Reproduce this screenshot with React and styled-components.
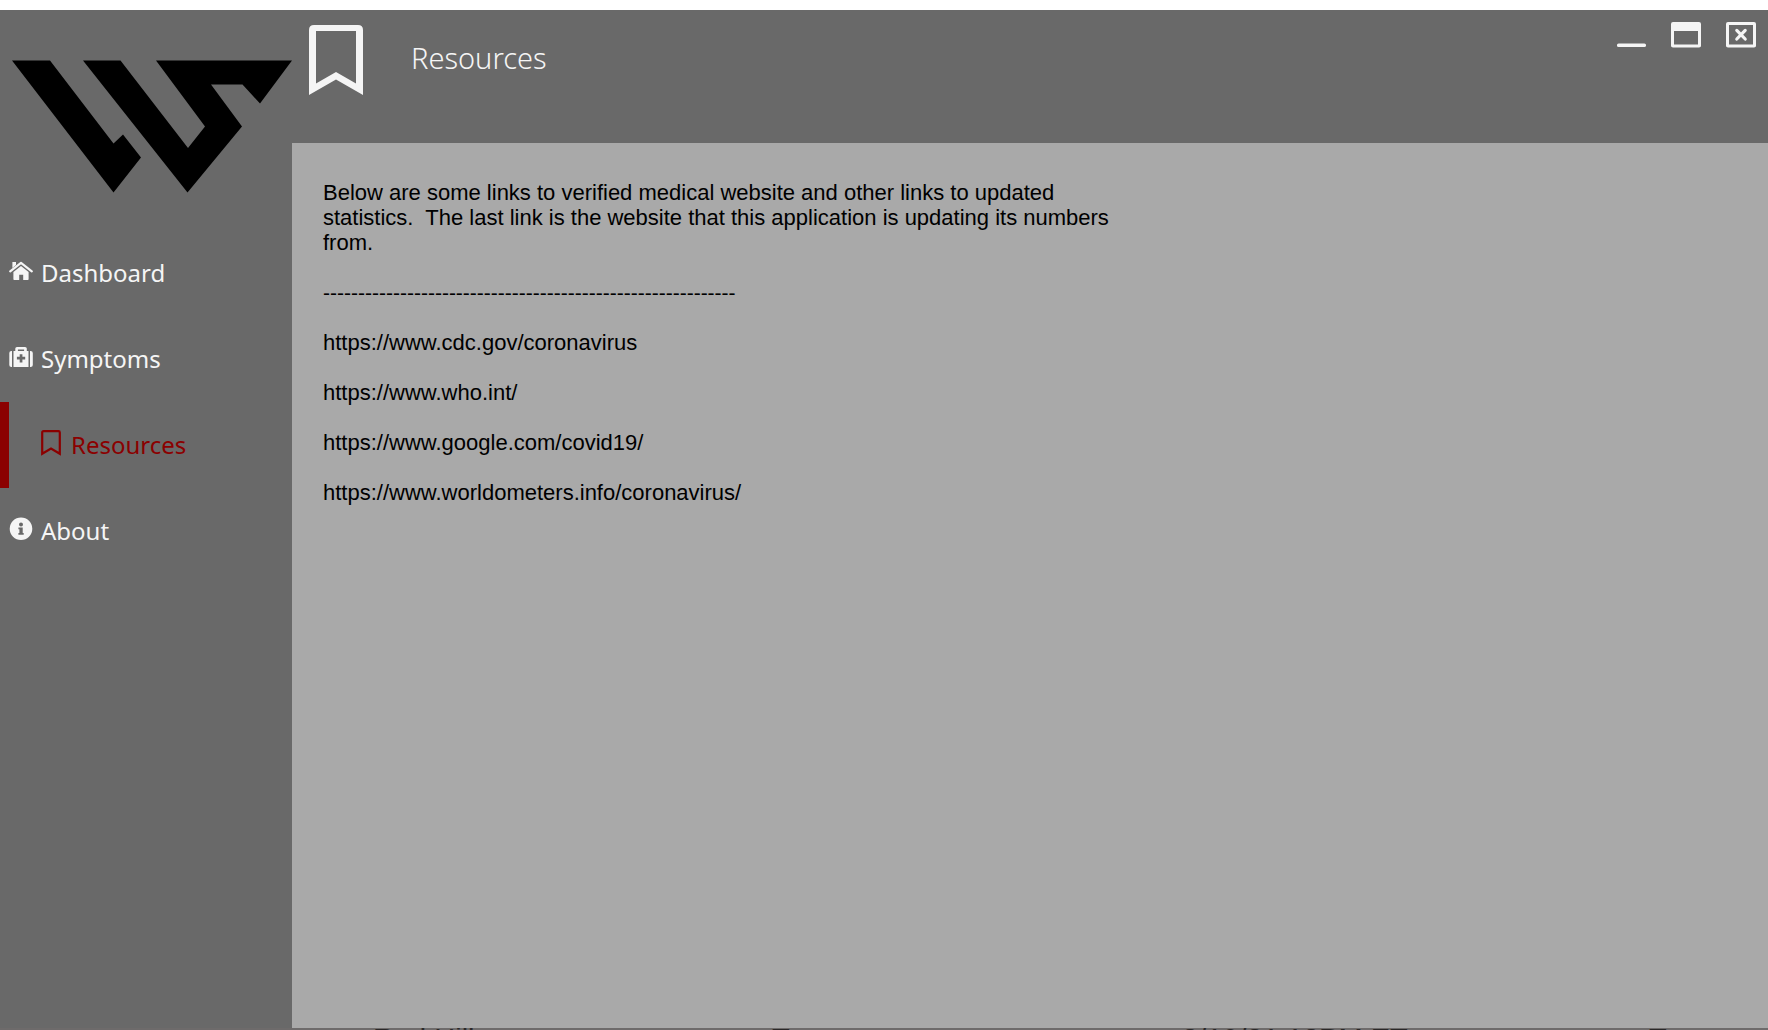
import React from "react";
import styled, { createGlobalStyle } from "styled-components";

const GlobalStyle = createGlobalStyle`
  * { box-sizing: border-box; }
  body {
    margin: 0;
    background: #ffffff;
    font-family: "Noto Sans", "Open Sans", sans-serif;
  }
`;

const Page = styled.div`
  min-height: 100vh;
  display: flex;
  flex-direction: column;
  padding-top: 10px;
`;

const Shell = styled.div`
  flex: 1;
  display: grid;
  grid-template-columns: 292px 1fr;
  background: #696969;
`;

const Sidebar = styled.aside`
  display: flex;
  flex-direction: column;
`;

const Brand = styled.div`
  height: 220px;
  padding-top: 50px;
`;

const Logo = styled.svg`
  display: block;
  width: 292px;
  height: 133px;
`;

const Nav = styled.nav`
  display: flex;
  flex-direction: column;
`;

const NavButton = styled.button`
  display: flex;
  align-items: center;
  gap: ${(p) => (p.$active ? 10 : 7)}px;
  height: 86px;
  border: 0;
  border-left: 9px solid ${(p) => (p.$active ? "#8b0000" : "transparent")};
  padding: 0 0 0 ${(p) => (p.$active ? 32 : 0)}px;
  background: transparent;
  color: ${(p) => (p.$active ? "#8b0000" : "#f5f5f5")};
  font-family: inherit;
  font-size: 24px;
  line-height: 32px;
  text-align: left;

  svg {
    display: block;
    margin-bottom: 4px;
  }
`;

const Main = styled.div`
  display: flex;
  flex-direction: column;
`;

const TitleBar = styled.header`
  display: flex;
  align-items: flex-start;
  height: 133px;
  padding: 12px 12px 0 17px;
  color: #f5f5f5;
`;

const TitleIcon = styled.svg`
  display: block;
  margin-top: 3px;
`;

const Title = styled.h1`
  flex: 1;
  margin: 16px 0 0 48px;
  font-size: 29px;
  line-height: 40px;
  font-weight: 300;
`;

const WindowControls = styled.div`
  display: flex;
  gap: 25px;
`;

const ControlButton = styled.button`
  border: 0;
  padding: 0;
  background: transparent;
  color: inherit;

  svg {
    display: block;
  }
`;

const Content = styled.main`
  flex: 1;
  padding: 37px 31px;
  background: #a9a9a9;
  color: #000000;
  font-family: "Liberation Sans", Arial, sans-serif;
  font-size: 22px;
  line-height: 25px;
`;

const Paragraph = styled.p`
  max-width: 790px;
  margin: 0 0 25px;
  white-space: pre-wrap;
`;

const Divider = styled(Paragraph)`
  font-size: 21px;
`;

const LinkList = styled.ul`
  display: flex;
  flex-direction: column;
  align-items: flex-start;
  gap: 25px;
  margin: 0;
  padding: 0;
  list-style: none;
`;

const ResourceLink = styled.a`
  color: inherit;
  text-decoration: none;
`;

const BottomEdge = styled.div`
  display: grid;
  grid-template-columns: 399px 410px 467px 1fr;
  height: 2px;
  padding-left: 373px;
  overflow: hidden;
  background: #6e6b6b;
  color: #2a2828;
  font-family: "Liberation Sans", Arial, sans-serif;
  font-size: 29px;
  line-height: 22px;
`;

const HomeIcon = () => (
  <svg width="25" height="20" viewBox="0 0 25 20" aria-hidden="true">
    <path d="M1.2 10.4 12 1.9 22.8 10.4" fill="none" stroke="currentColor" strokeWidth="2.2" strokeLinecap="round" strokeLinejoin="round" />
    <path d="M3.4 1H7V4L3.4 7Z" fill="currentColor" />
    <path d="M12 5 19.6 11V18.2Q19.6 19 18.8 19H14.2V13.8H10.2V19H5.2Q4.4 19 4.4 18.2V11Z" fill="currentColor" />
  </svg>
);

const MedkitIcon = () => (
  <svg width="25" height="22" viewBox="0 0 25 22" aria-hidden="true">
    <path d="M3 5V21H2.4Q.3 21 .3 19V7Q.3 5 2.4 5ZM21 5V21H21.6Q23.8 21 23.8 19V7Q23.8 5 21.6 5Z" fill="currentColor" />
    <path fillRule="evenodd" d="M4.5 5H6.3V2.6Q6.3 1 8 1H16Q17.8 1 17.8 2.6V5H19.5V21H4.5ZM8.9 3.5V5H15.1V3.5ZM10.7 8.2V10.8H7.9V13.6H10.7V16.6H13.4V13.6H16.2V10.8H13.4V8.2Z" fill="currentColor" />
  </svg>
);

const BookmarkIcon = () => (
  <svg width="20" height="26" viewBox="0 0 20 26" aria-hidden="true">
    <path d="M1.2 23.8V2.5Q1.2 1.2 2.5 1.2H17.5Q18.8 1.2 18.8 2.5V23.8L10 18.6Z" fill="none" stroke="currentColor" strokeWidth="2.2" />
  </svg>
);

const InfoIcon = () => (
  <svg width="25" height="24" viewBox="0 0 25 24" aria-hidden="true">
    <path fillRule="evenodd" d="M12 .5a11.3 11.3 0 1 1 0 22.6a11.3 11.3 0 1 1 0-22.6ZM12 5.6a2 2 0 1 0 0 4a2 2 0 1 0 0-4ZM9.4 10.6V12.3H10.4V16H9.4V17.8H14.7V16H13.7V10.6Z" fill="currentColor" />
  </svg>
);

const navItems = [
  { label: "Dashboard", Icon: HomeIcon },
  { label: "Symptoms", Icon: MedkitIcon },
  { label: "Resources", Icon: BookmarkIcon, active: true },
  { label: "About", Icon: InfoIcon },
];

const links = [
  "https://www.cdc.gov/coronavirus",
  "https://www.who.int/",
  "https://www.google.com/covid19/",
  "https://www.worldometers.info/coronavirus/",
];

export default function App() {
  return (
    <Page>
      <GlobalStyle />
      <Shell>
        <Sidebar>
          <Brand>
            <Logo viewBox="0 60 292 133" role="img" aria-label="WS">
              <path d="M12 60.5H50L113.5 143.5L123 134.5L141 157.5L113.5 192.5Z" />
              <path d="M83 60.5H120.5L188 148L205 126.5L156 60.5H292L260 103.5L242.5 84.5H211L242 126.5L187.5 192.5Z" />
            </Logo>
          </Brand>
          <Nav>
            {navItems.map(({ label, Icon, active }) => (
              <NavButton key={label} type="button" $active={active}>
                <Icon />
                {label}
              </NavButton>
            ))}
          </Nav>
        </Sidebar>
        <Main>
          <TitleBar>
            <TitleIcon width="54" height="70" viewBox="0 0 54 70" aria-hidden="true">
              <path fillRule="evenodd" d="M0 70V5Q0 0 5 0H49Q54 0 54 5V70L27 54.5ZM7 58.5 27 47 47 58.5V6H7Z" fill="currentColor" />
            </TitleIcon>
            <Title>Resources</Title>
            <WindowControls>
              <ControlButton type="button" aria-label="Minimize">
                <svg width="30" height="26" viewBox="0 0 30 26">
                  <rect x="1" y="21.5" width="29" height="3.6" rx="1.6" fill="currentColor" />
                </svg>
              </ControlButton>
              <ControlButton type="button" aria-label="Maximize">
                <svg width="30" height="26" viewBox="0 0 30 26">
                  <path fillRule="evenodd" d="M2 0H28Q30 0 30 2V24Q30 25.4 28 25.4H2Q0 25.4 0 24V2Q0 0 2 0ZM3 9V22.4H27V9Z" fill="currentColor" />
                </svg>
              </ControlButton>
              <ControlButton type="button" aria-label="Close">
                <svg width="30" height="26" viewBox="0 0 30 26">
                  <path fillRule="evenodd" d="M2 0H28Q30 0 30 2V24Q30 25.4 28 25.4H2Q0 25.4 0 24V2Q0 0 2 0ZM3 3V22.4H27V3Z" fill="currentColor" />
                  <path d="M10.8 8.4 19.2 17M19.2 8.4 10.8 17" stroke="currentColor" strokeWidth="3.2" strokeLinecap="round" />
                </svg>
              </ControlButton>
            </WindowControls>
          </TitleBar>
          <Content>
            <Paragraph>
              {"Below are some links to verified medical website and other links to updated statistics.  The last link is the website that this application is updating its numbers from."}
            </Paragraph>
            <Divider>{"-".repeat(59)}</Divider>
            <LinkList>
              {links.map((url) => (
                <li key={url}>
                  <ResourceLink href={url}>{url}</ResourceLink>
                </li>
              ))}
            </LinkList>
          </Content>
        </Main>
      </Shell>
      <BottomEdge aria-hidden="true">
        <span>Red Hill</span>
        <span>T</span>
        <span>3/10/21 12PM ET</span>
        <span>T</span>
      </BottomEdge>
    </Page>
  );
}
